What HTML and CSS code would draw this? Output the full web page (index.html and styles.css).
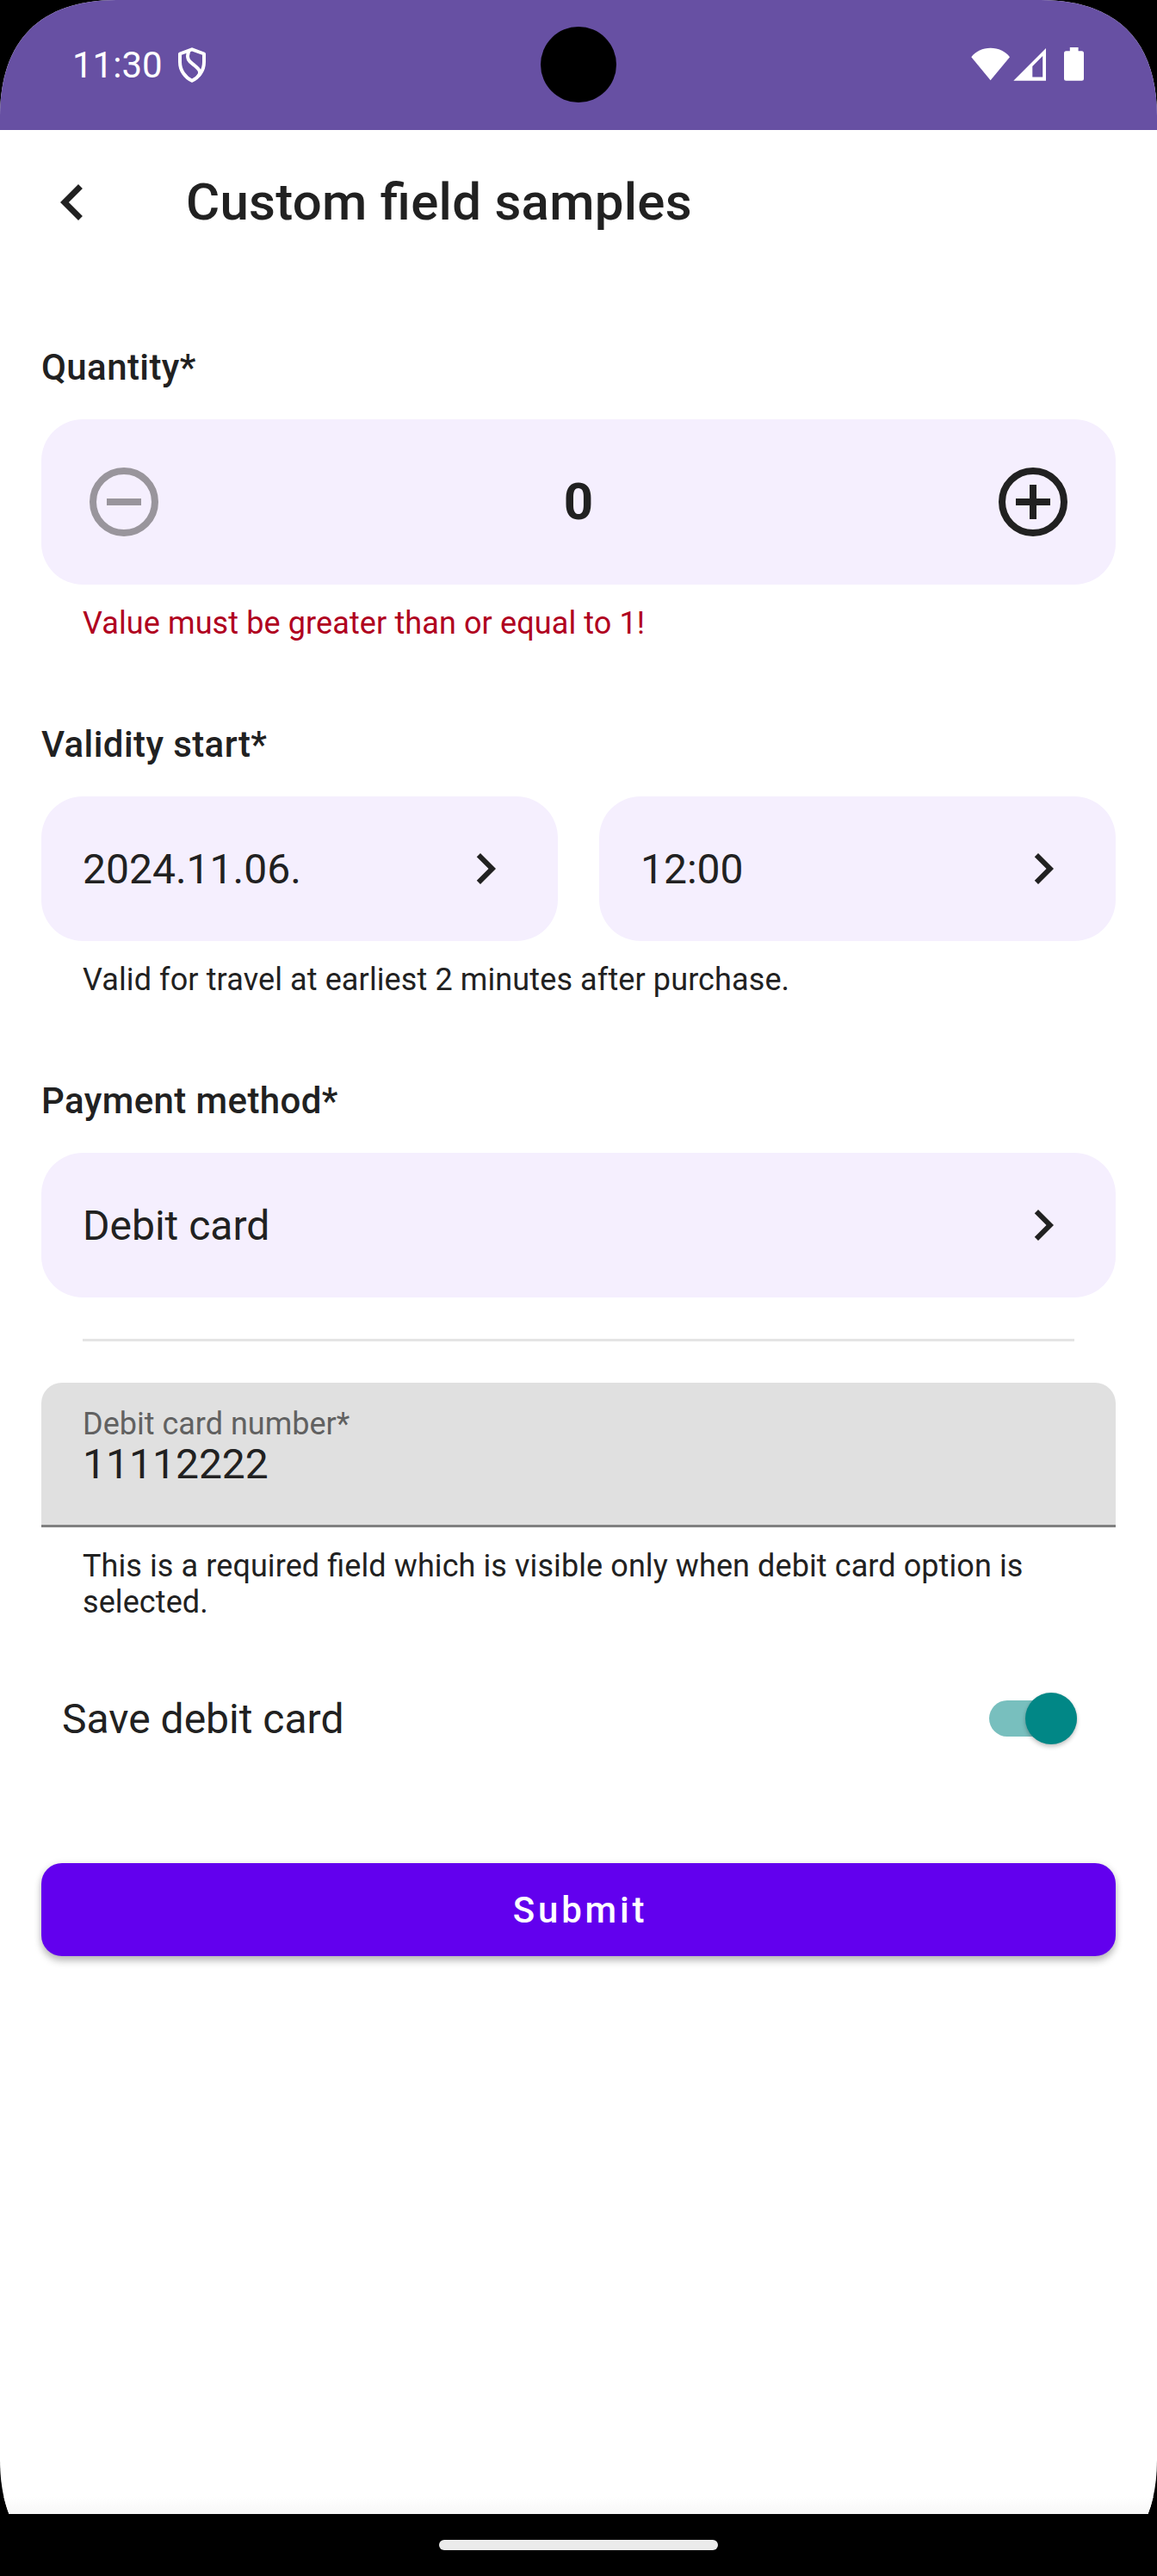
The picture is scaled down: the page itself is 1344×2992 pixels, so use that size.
FILE: index.html
```
<!DOCTYPE html>
<html lang="en">
<head>
<meta charset="utf-8">
<title>Custom field samples</title>
<link rel="stylesheet" href="styles.css">
</head>
<body>
<div class="screen">
  <header class="status-bar">
    <div class="status-left">
      <span class="clock">11:30</span>
      <svg class="shield" width="34" height="41" viewBox="0 0 34 41" fill="none" stroke="#fff" stroke-width="4" stroke-linejoin="round">
        <path d="M17 2.3 31 7.5V17C31 27 25 35 17 38.8 9 35 3 27 3 17V7.5Z"/>
        <path d="M13.5 4C9 15 16 17.5 20 21 26 26 27.5 28.5 25 33"/>
      </svg>
    </div>
    <svg class="status-icons" width="132" height="40" viewBox="0 0 132 40" fill="#fff">
      <path d="M.3 11.2C5.6 4.4 13.3.7 22.6.7S39.600 4.400 45 11.200L22.600 38.300Z"/>
      <path fill-rule="evenodd" d="M87 1V38.700H49.300ZM83.200 10 71.300 21.900V34.500H83.200Z"/>
      <path d="M114.800 0H124.600V4.200H128.500A2.500 2.500 0 0 1 131 6.700V36.300A2.500 2.500 0 0 1 128.500 38.800H110.500A2.500 2.500 0 0 1 108 36.300V6.700A2.500 2.500 0 0 1 110.500 4.200H114.800Z"/>
    </svg>
    <span class="camera"></span>
  </header>

  <div class="app-bar">
    <svg class="back" width="84" height="84" viewBox="0 0 24 24"><path d="M15.410 7.410 14 6l-6 6 6 6 1.410-1.410L10.830 12z"/></svg>
    <h1 class="title">Custom field samples</h1>
  </div>

  <main class="form">
    <section class="field">
      <h2 class="label">Quantity*</h2>
      <div class="box stepper">
        <svg class="step disabled" width="96" height="96" viewBox="0 0 96 96"><circle cx="48" cy="48" r="36"/><path d="M28 48H68"/></svg>
        <span class="count">0</span>
        <svg class="step" width="96" height="96" viewBox="0 0 96 96"><circle cx="48" cy="48" r="36"/><path d="M28 48H68M48 28V68"/></svg>
      </div>
      <p class="helper error">Value must be greater than or equal to 1!</p>
    </section>

    <section class="field">
      <h2 class="label">Validity start*</h2>
      <div class="pair">
        <div class="box select"><span>2024.11.06.</span><svg width="72" height="72" viewBox="0 0 24 24"><path d="M10 6 8.590 7.410 13.170 12l-4.580 4.590L10 18l6-6z"/></svg></div>
        <div class="box select"><span>12:00</span><svg width="72" height="72" viewBox="0 0 24 24"><path d="M10 6 8.590 7.410 13.170 12l-4.580 4.590L10 18l6-6z"/></svg></div>
      </div>
      <p class="helper">Valid for travel at earliest 2 minutes after purchase.</p>
    </section>

    <section class="field payment">
      <h2 class="label">Payment method*</h2>
      <div class="box select"><span>Debit card</span><svg width="72" height="72" viewBox="0 0 24 24"><path d="M10 6 8.590 7.410 13.170 12l-4.580 4.590L10 18l6-6z"/></svg></div>
      <hr class="divider">
      <div class="text-input">
        <span class="input-label">Debit card number*</span>
        <span class="input-value">11112222</span>
      </div>
      <p class="helper">This is a required field which is visible only when debit card option is selected.</p>
    </section>

    <div class="switch-row">
      <span>Save debit card</span>
      <span class="switch"><span class="thumb"></span></span>
    </div>

    <button class="submit" type="button">Submit</button>
  </main>
  <div class="bottom-shade"></div>
</div>
<footer class="nav-bar"><span class="pill"></span></footer>
</body>
</html>
```
FILE: styles.css
```
* {
  box-sizing: border-box;
}

body {
  margin: 0;
  width: 1344px;
  height: 2992px;
  display: flex;
  flex-direction: column;
  background: #000;
  color: #212121;
  font-family: Roboto, sans-serif;
  font-feature-settings: "liga" 1;
}

h1, h2, p {
  margin: 0;
}

svg {
  display: block;
  flex: none;
}

.screen {
  height: 2920px;
  display: flex;
  flex-direction: column;
  background: #fff;
  clip-path: path("M0 135C0 47 47 0 135 0H1209C1297 0 1344 47 1344 135V2857C1344 2945 1297 2992 1209 2992H135C47 2992 0 2945 0 2857Z");
}

.status-bar {
  position: relative;
  height: 151px;
  padding: 0 84px;
  display: flex;
  align-items: center;
  justify-content: space-between;
  background: #6750a3;
  color: #fff;
}

.status-left {
  display: flex;
  align-items: center;
  gap: 17px;
}

.shield {
  margin-top: -1px;
}

.clock {
  font-size: 42px;
  line-height: 49px;
}

.status-icons {
  margin-top: -1px;
}

.camera {
  position: absolute;
  left: 628px;
  top: 31px;
  width: 88px;
  height: 88px;
  border-radius: 50%;
  background: #000;
}

.app-bar {
  height: 168px;
  padding-left: 42px;
  display: flex;
  align-items: center;
  gap: 90px;
}

.back,
.select svg {
  fill: #212121;
}

.title {
  font-size: 60px;
  font-weight: 500;
  line-height: 70px;
  letter-spacing: 0.27px;
}

.form {
  flex: 1;
  padding: 83px 48px 0;
  display: flex;
  flex-direction: column;
}

.field {
  margin-bottom: 95px;
}

.label {
  margin-bottom: 36px;
  font-size: 42px;
  font-weight: 500;
  line-height: 49px;
  letter-spacing: 0.4px;
}

.box {
  display: flex;
  align-items: center;
  justify-content: space-between;
  padding: 0 48px;
  border-radius: 48px;
  background: #f5effe;
}

.stepper {
  height: 192px;
}

.step {
  fill: none;
  stroke: #212121;
  stroke-width: 8;
}

.step.disabled {
  stroke: #99959c;
}

.count {
  font-size: 60px;
  font-weight: 700;
  line-height: 70px;
}

.pair {
  display: grid;
  grid-template-columns: 1fr 1fr;
  gap: 48px;
}

.select {
  height: 168px;
  font-size: 48px;
}

.helper {
  padding: 24px 48px 0;
  font-size: 36px;
  line-height: 42px;
  letter-spacing: 0.11px;
}

.helper.error {
  color: #b00020;
}

.payment {
  margin-bottom: 78px;
}

.payment .helper {
  letter-spacing: 0.09px;
}

.divider {
  height: 3px;
  margin: 48px;
  border: 0;
  background: #e4e4e4;
}

.text-input {
  height: 168px;
  padding: 27px 48px 0;
  display: flex;
  flex-direction: column;
  border-bottom: 3px solid #808080;
  border-radius: 24px 24px 0 0;
  background: #e0e0e0;
}

.input-label {
  color: #616161;
  font-size: 36px;
  line-height: 42px;
}

.input-value {
  font-size: 48px;
  line-height: 52px;
}

.switch-row {
  height: 72px;
  margin-bottom: 132px;
  padding: 0 45px 0 24px;
  display: flex;
  align-items: center;
  justify-content: space-between;
  font-size: 48px;
}

.switch {
  width: 102px;
  height: 42px;
  display: flex;
  align-items: center;
  justify-content: flex-end;
  border-radius: 21px;
  background: #78bfbe;
}

.thumb {
  width: 60px;
  height: 60px;
  flex: none;
  border-radius: 50%;
  background: #018786;
  box-shadow: 0 3px 5px rgba(0, 0, 0, 0.22), 0 0 3px rgba(0, 0, 0, 0.08);
}

.submit {
  height: 108px;
  padding: 0 0 0 4px;
  border: 0;
  border-radius: 24px;
  background: #6200ee;
  box-shadow: 0 6px 9px rgba(0, 0, 0, 0.22), 0 1px 9px rgba(0, 0, 0, 0.12);
  color: #fff;
  font: 500 42px/49px Roboto, sans-serif;
  letter-spacing: 3.8px;
}

.bottom-shade {
  height: 20px;
  background: linear-gradient(#fff, #f7f7f7);
}

.nav-bar {
  height: 72px;
  padding-top: 30px;
  display: flex;
  justify-content: center;
}

.pill {
  width: 324px;
  height: 12px;
  border-radius: 6px;
  background: #ebebeb;
}
```
